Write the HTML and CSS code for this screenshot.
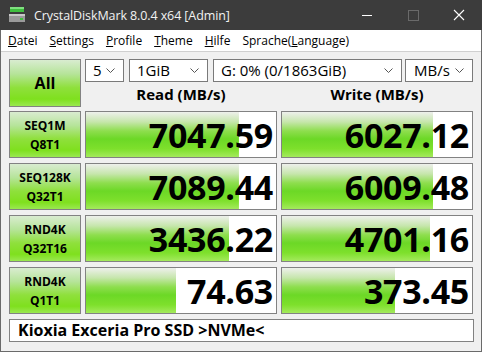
FILE: index.html
```html
<!DOCTYPE html>
<html lang="de">
<head>
  <meta charset="UTF-8" />
  <title>CrystalDiskMark 8.0.4 x64 [Admin]</title>
  <link rel="stylesheet" href="styles.css">
</head>
<body>
  <div class="window">

    <!-- Title bar -->
    <div class="titlebar">
      <svg class="app-icon" width="18" height="18" viewBox="0 0 18 18">
        <rect x="2" y="1" width="14" height="5" fill="#3fbf3f"/>
        <rect x="2" y="1" width="14" height="2" fill="#7fe07f"/>
        <rect x="1" y="8" width="16" height="8" fill="#9a9a9a"/>
        <rect x="1" y="8" width="16" height="2" fill="#c8c8c8"/>
        <rect x="12" y="12" width="3" height="2" fill="#3fbf3f"/>
      </svg>
      <span class="title">CrystalDiskMark 8.0.4 x64 [Admin]</span>
      <div class="win-btns">
        <svg width="46" height="30" viewBox="0 0 46 30"><line x1="18" y1="15.5" x2="28" y2="15.5" stroke="#fff" stroke-width="1"/></svg>
        <svg width="46" height="30" viewBox="0 0 46 30"><rect x="18.5" y="10.5" width="10" height="10" fill="none" stroke="#6a6a6a"/></svg>
        <svg width="46" height="30" viewBox="0 0 46 30"><path d="M18 10 L28 20 M28 10 L18 20" stroke="#fff" stroke-width="1.1"/></svg>
      </div>
    </div>

    <!-- Menu -->
    <div class="menubar">
      <span class="menu-item"><u>D</u>atei</span>
      <span class="menu-item"><u>S</u>ettings</span>
      <span class="menu-item"><u>P</u>rofile</span>
      <span class="menu-item"><u>T</u>heme</span>
      <span class="menu-item"><u>H</u>ilfe</span>
      <span class="menu-item">Sprache(<u>L</u>anguage)</span>
    </div>

    <!-- Main -->
    <div class="main">
      <div class="top">
        <div class="btn all-btn">All</div>
        <div class="top-right">
          <div class="selects">
            <div class="select sel-count">5<svg class="chev" width="9" height="6" viewBox="0 0 9 6"><polyline points="0.5,0.5 4.5,4.5 8.5,0.5" fill="none" stroke="#555"/></svg></div>
            <div class="select sel-size">1GiB<svg class="chev" width="9" height="6" viewBox="0 0 9 6"><polyline points="0.5,0.5 4.5,4.5 8.5,0.5" fill="none" stroke="#555"/></svg></div>
            <div class="select sel-drive">G: 0% (0/1863GiB)<svg class="chev" width="9" height="6" viewBox="0 0 9 6"><polyline points="0.5,0.5 4.5,4.5 8.5,0.5" fill="none" stroke="#555"/></svg></div>
            <div class="select sel-unit">MB/s<svg class="chev" width="9" height="6" viewBox="0 0 9 6"><polyline points="0.5,0.5 4.5,4.5 8.5,0.5" fill="none" stroke="#555"/></svg></div>
          </div>
          <div class="heads">
            <div class="col-head">Read (MB/s)</div>
            <div class="col-head">Write (MB/s)</div>
          </div>
        </div>
      </div>

      <div class="results">
        <div class="btn test-btn">SEQ1M<br>Q8T1</div>
        <div class="meter" style="--w: 80.5%">7047.59</div>
        <div class="meter" style="--w: 79.5%">6027.12</div>

        <div class="btn test-btn">SEQ128K<br>Q32T1</div>
        <div class="meter" style="--w: 80.5%">7089.44</div>
        <div class="meter" style="--w: 79.5%">6009.48</div>

        <div class="btn test-btn">RND4K<br>Q32T16</div>
        <div class="meter" style="--w: 75.5%">3436.22</div>
        <div class="meter" style="--w: 78%">4701.16</div>

        <div class="btn test-btn">RND4K<br>Q1T1</div>
        <div class="meter" style="--w: 47.5%">74.63</div>
        <div class="meter" style="--w: 59.5%">373.45</div>
      </div>

      <div class="drive-name">Kioxia Exceria Pro SSD &gt;NVMe&lt;</div>
    </div>
  </div>
</body>
</html>
```

FILE: styles.css
```css
:root {
  --frame: #3c3c3c;
  --border: #828282;
  --bg: #f0f0f0;
  --text: #000000;
}

* {
  margin: 0;
  padding: 0;
  box-sizing: border-box;
}

body {
  width: 482px;
  height: 352px;
  font-family: 'Open Sans', 'Noto Sans', sans-serif;
  color: var(--text);
  overflow: hidden;
}

.window {
  width: 482px;
  height: 352px;
  background: var(--bg);
  border: 1px solid #6a6a6a;
  border-top: none;
  display: flex;
  flex-direction: column;
}

/* Title bar */
.titlebar {
  height: 30px;
  margin: 0 -1px;
  background: var(--frame);
  display: flex;
  align-items: center;
  color: #f2f2f2;
}

.app-icon {
  margin-left: 8px;
  margin-right: 8px;
}

.title {
  font-size: 12.5px;
  letter-spacing: -0.1px;
}

.win-btns {
  margin-left: auto;
  display: flex;
}

.win-btns svg {
  display: block;
}

/* Menu */
.menubar {
  height: 22px;
  background: #ffffff;
  border-bottom: 1px solid #d0d0d0;
  display: flex;
  align-items: center;
  padding-left: 1px;
  font-size: 12px;
}

.menu-item {
  padding: 0 6px;
}

/* Main */
.main {
  padding: 7px 7px 9px 8px;
}

.top {
  display: flex;
  gap: 4px;
  height: 48px;
  margin-bottom: 4px;
}

.btn {
  border: 1px solid var(--border);
  background: linear-gradient(to bottom, #d9ecd0 0%, #b6e49a 30%, #8fe03c 60%, #7fe01e 85%, #9ae850 100%);
  display: flex;
  align-items: center;
  justify-content: center;
  text-align: center;
  font-weight: bold;
}

.all-btn {
  width: 72px;
  font-size: 16px;
}

.top-right {
  width: 388px;
  display: flex;
  flex-direction: column;
}

.selects {
  display: flex;
  height: 23px;
}

.select {
  background: #ffffff;
  border: 1px solid #7a7a7a;
  font-size: 15px;
  line-height: 21px;
  padding-left: 7px;
  position: relative;
}

.chev {
  position: absolute;
  right: 8px;
  top: 8px;
}

.sel-count { width: 39px; }
.sel-size { width: 79px; margin-left: 5px; }
.sel-drive { width: 189px; margin-left: 5px; }
.sel-unit { width: 68px; margin-left: 3px; padding-left: 8px; }

.heads {
  display: flex;
  gap: 4px;
  flex: 1;
}

.col-head {
  width: 192px;
  text-align: center;
  font-weight: bold;
  font-size: 15px;
  line-height: 25px;
}

/* Results grid */
.results {
  display: grid;
  grid-template-columns: 72px 192px 192px;
  grid-auto-rows: 47px;
  column-gap: 4px;
  row-gap: 5px;
}

.test-btn {
  font-size: 12px;
  line-height: 19px;
}

.meter {
  border: 1px solid var(--border);
  background-color: #ffffff;
  background-image: linear-gradient(to bottom, #eef0ec 0%, #c6e6ac 22%, #8ede4e 42%, #6cd826 60%, #7ee02c 82%, #a4ea5c 100%);
  background-size: var(--w) 100%;
  background-repeat: no-repeat;
  text-align: right;
  font-weight: bold;
  font-size: 34px;
  line-height: 47px;
  padding-right: 3px;
  letter-spacing: -0.3px;
}

.drive-name {
  margin-top: 5px;
  height: 23px;
  border: 1px solid var(--border);
  background: #ffffff;
  font-weight: bold;
  font-size: 16px;
  line-height: 21px;
  padding-left: 8px;
}
```
